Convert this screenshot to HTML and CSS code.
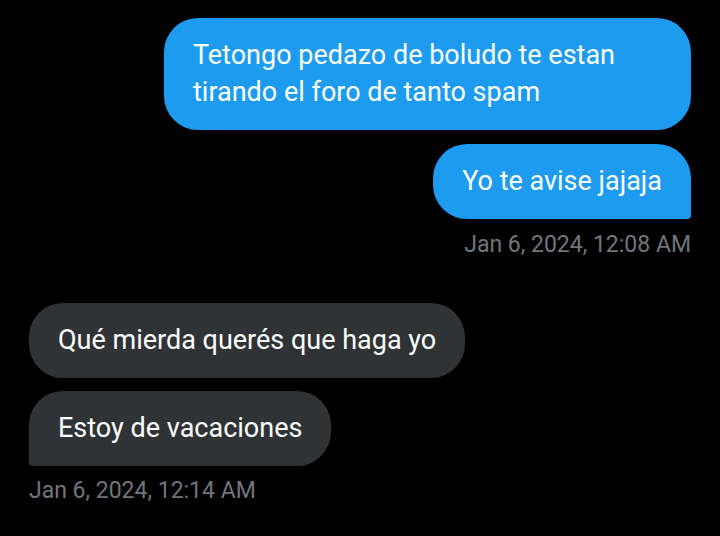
FILE: index.html
```html
<!DOCTYPE html>
<html>
<head>
<meta charset="utf-8">
<link rel="stylesheet" href="styles.css">
</head>
<body>
<div class="chat">
  <div class="group sent">
    <div class="bubble">Tetongo pedazo de boludo te estan tirando el foro de tanto spam</div>
    <div class="bubble last">Yo te avise jajaja</div>
    <div class="time">Jan 6, 2024, 12:08 AM</div>
  </div>
  <div class="group received">
    <div class="bubble">Qué mierda querés que haga yo</div>
    <div class="bubble last">Estoy de vacaciones</div>
    <div class="time">Jan 6, 2024, 12:14 AM</div>
  </div>
</div>
</body>
</html>
```
FILE: styles.css
```css
html, body {
  margin: 0;
  padding: 0;
  background: #000;
}
body {
  width: 720px;
  height: 536px;
  overflow: hidden;
  font-family: Roboto, "Noto Sans", sans-serif;
}
.chat {
  display: flex;
  flex-direction: column;
  padding: 18px 29px 0 29px;
}
.group {
  display: flex;
  flex-direction: column;
  gap: 14px;
}
.group.sent {
  align-items: flex-end;
}
.group.received {
  align-items: flex-start;
  margin-top: 44px;
  gap: 13px;
}
.bubble {
  box-sizing: border-box;
  max-width: 527px;
  font-size: 27px;
  line-height: 37px;
  padding: 19px 29px;
  border-radius: 34px;
  color: #fff;
}
.sent .bubble {
  background: #1d9bf0;
}
.received .bubble {
  background: #2f3336;
}
.sent .bubble.last {
  border-bottom-right-radius: 4px;
}
.received .bubble.last {
  border-bottom-left-radius: 4px;
}
.time {
  color: #71767b;
  font-size: 23px;
  line-height: 28px;
  margin-top: -2px;
}
```
